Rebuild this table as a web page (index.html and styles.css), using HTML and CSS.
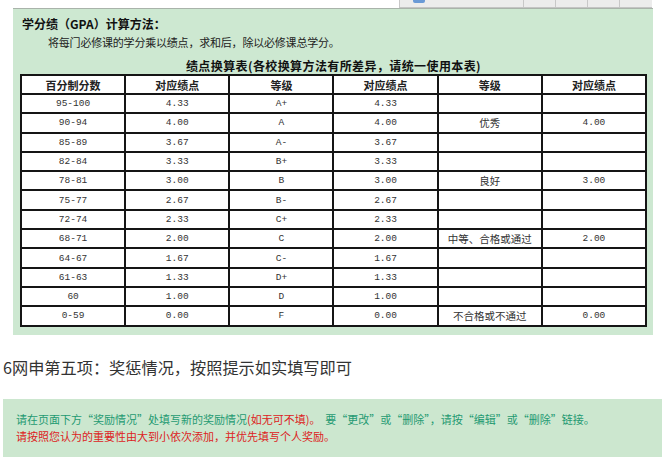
FILE: index.html
```html
<!DOCTYPE html>
<html lang="zh-CN">
<head>
<meta charset="utf-8">
<link rel="stylesheet" href="styles.css">
</head>
<body>
<div class="strip">
  <div class="scell first"><span class="icon"></span></div>
  <div class="scell"></div>
  <div class="scell"></div>
  <div class="scell"></div>
  <div class="scell last"></div>
</div>
<div class="panel">
  <div class="gpa-title">学分绩（GPA）计算方法：</div>
  <div class="gpa-desc">将每门必修课的学分乘以绩点，求和后，除以必修课总学分。</div>
  <div class="tbl-title">绩点换算表(各校换算方法有所差异，请统一使用本表)</div>
  <table class="grid">
    <tr class="head"><th>百分制分数</th><th>对应绩点</th><th>等级</th><th>对应绩点</th><th>等级</th><th>对应绩点</th></tr>
    <tr><td>95-100</td><td>4.33</td><td>A+</td><td>4.33</td><td></td><td></td></tr>
    <tr><td>90-94</td><td>4.00</td><td>A</td><td>4.00</td><td class="cn">优秀</td><td>4.00</td></tr>
    <tr><td>85-89</td><td>3.67</td><td>A-</td><td>3.67</td><td></td><td></td></tr>
    <tr><td>82-84</td><td>3.33</td><td>B+</td><td>3.33</td><td></td><td></td></tr>
    <tr><td>78-81</td><td>3.00</td><td>B</td><td>3.00</td><td class="cn">良好</td><td>3.00</td></tr>
    <tr><td>75-77</td><td>2.67</td><td>B-</td><td>2.67</td><td></td><td></td></tr>
    <tr><td>72-74</td><td>2.33</td><td>C+</td><td>2.33</td><td></td><td></td></tr>
    <tr><td>68-71</td><td>2.00</td><td>C</td><td>2.00</td><td class="cn">中等、合格或通过</td><td>2.00</td></tr>
    <tr><td>64-67</td><td>1.67</td><td>C-</td><td>1.67</td><td></td><td></td></tr>
    <tr><td>61-63</td><td>1.33</td><td>D+</td><td>1.33</td><td></td><td></td></tr>
    <tr><td>60</td><td>1.00</td><td>D</td><td>1.00</td><td></td><td></td></tr>
    <tr><td>0-59</td><td>0.00</td><td>F</td><td>0.00</td><td class="cn">不合格或不通过</td><td>0.00</td></tr>
  </table>
</div>
<div class="step">6网申第五项：奖惩情况，按照提示如实填写即可</div>
<div class="notice">
  <div class="line"><span class="teal">请在页面下方“奖励情况”处填写新的奖励情况</span><span class="red">(如无可不填)。</span><span class="teal">&nbsp;&nbsp;要“更改”或“删除”，请按“编辑”或“删除”链接。</span></div>
  <div class="line red">请按照您认为的重要性由大到小依次添加，并优先填写个人奖励。</div>
</div>
</body>
</html>
```
FILE: styles.css
```css
html, body {
  margin: 0;
  padding: 0;
  background: #ffffff;
}
body {
  width: 665px;
  height: 461px;
  overflow: hidden;
  font-family: "Noto Sans CJK SC", sans-serif;
}
.strip {
  display: flex;
  margin-left: 399px;
  width: 253px;
  height: 7px;
  background: #ececec;
  border-bottom: 1px solid #c4c4c4;
  box-sizing: content-box;
}
.scell {
  position: relative;
  width: 32px;
  border-right: 1px solid #c8c8c8;
  box-sizing: border-box;
}
.scell.first {
  width: 125px;
  border-left: 1px solid #c8c8c8;
}
.scell.last {
  border-right: none;
}
.icon {
  position: absolute;
  left: 13px;
  top: 0;
  width: 12px;
  height: 3px;
  background: #6a9ad6;
  border-radius: 0 0 2px 2px;
}
.panel {
  margin-left: 13px;
  width: 640px;
  height: 327px;
  box-sizing: border-box;
  background: #cde8d1;
  border-top: 1px solid #a9b3aa;
  padding: 6px 0 0 7px;
  color: #111;
}
.gpa-title {
  font-family: "Noto Sans CJK SC", sans-serif;
  font-weight: bold;
  font-size: 12px;
  line-height: 18px;
  margin-left: 2px;
}
.gpa-desc {
  font-size: 11px;
  line-height: 18px;
  margin-left: 28px;
  letter-spacing: -0.2px;
  color: #222;
}
.tbl-title {
  font-weight: bold;
  font-size: 12px;
  line-height: 16px;
  margin-top: 7px;
  width: 627px;
  text-align: center;
  letter-spacing: 0.4px;
}
.grid {
  border-collapse: collapse;
  width: 627px;
  table-layout: fixed;
  background: #ffffff;
}
.grid th, .grid td {
  border: 2px solid #151515;
  padding: 0;
  text-align: center;
  height: 17.3px;
  color: #333;
}
.grid th {
  font-family: "Noto Sans CJK SC", sans-serif;
  font-size: 11px;
  font-weight: bold;
  color: #222;
  height: 17px;
}
.grid td {
  font-family: "Liberation Mono", monospace;
  font-size: 9.5px;
}
.grid td.cn {
  font-family: "Noto Sans CJK SC", sans-serif;
  font-size: 10.5px;
}
.step {
  margin: 22px 0 0 3px;
  font-size: 16.2px;
  line-height: 20px;
  color: #333;
}
.notice {
  margin: 22px 0 0 3px;
  width: 659px;
  height: 58px;
  box-sizing: border-box;
  background: #cce7cf;
  padding: 12px 0 0 13px;
  font-size: 11px;
  line-height: 17px;
}
.teal {
  color: #1f9a72;
}
.red {
  color: #dd2222;
}
```
